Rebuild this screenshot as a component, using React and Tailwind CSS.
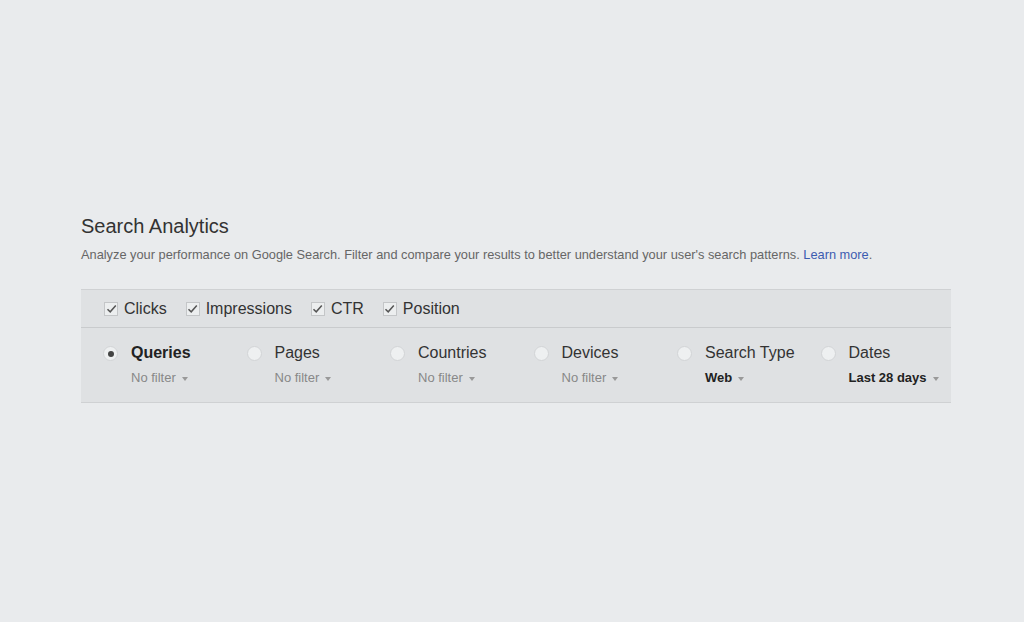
import React from 'react';

const metrics = ['Clicks', 'Impressions', 'CTR', 'Position'];

const groups = [
  { label: 'Queries', value: 'No filter', active: true },
  { label: 'Pages', value: 'No filter' },
  { label: 'Countries', value: 'No filter' },
  { label: 'Devices', value: 'No filter' },
  { label: 'Search Type', value: 'Web', strong: true },
  { label: 'Dates', value: 'Last 28 days', strong: true },
];

function Check() {
  return (
    <span className="flex h-[14px] w-[14px] items-center justify-center border border-[#c4c6c8] bg-[#eceeef]">
      <svg width="11" height="10" viewBox="0 0 11 10">
        <path d="M1.5 5.2 L4.2 7.8 L9.8 1.5" fill="none" stroke="#555" strokeWidth="1.5" />
      </svg>
    </span>
  );
}

function Caret() {
  return <span className="ml-[6px] inline-block h-0 w-0 border-x-[3.5px] border-t-[4px] border-x-transparent border-t-[#999] align-middle" />;
}

export default function App() {
  return (
    <div className="h-[622px] w-[1024px] bg-[#e9ebed] pt-[214px] font-['Liberation_Sans',Arial,sans-serif]">
      <div className="pl-[81px]">
        <h1 className="text-[20px] leading-[24px] text-[#333]">Search Analytics</h1>
        <p className="mt-[9px] text-[12.8px] leading-[16px] text-[#666]">
          Analyze your performance on Google Search. Filter and compare your results to better understand your user's search patterns.{' '}
          <span className="text-[#3d5cb0]">Learn more</span>.
        </p>
      </div>

      <div className="ml-[81px] mt-[26px] w-[870px] border-y border-[#cfd1d3] bg-[#dfe1e3]">
        <div className="flex h-[38px] items-center border-b border-[#c9cbcd] pl-[23px] text-[16px] text-[#333]">
          {metrics.map((m) => (
            <label key={m} className="mr-[19px] flex items-center gap-[6px]">
              <Check />
              <span>{m}</span>
            </label>
          ))}
        </div>
        <div className="flex h-[74px] pl-[22px] pt-[15px]">
          {groups.map((g, i) => (
            <div key={g.label} className={`flex shrink-0 ${i < groups.length - 1 ? 'w-[143.5px]' : ''}`}>
              <span className="mt-[3px] flex h-[15px] w-[15px] items-center justify-center rounded-full border border-[#d2d4d6] bg-[#eef0f1]">
                {g.active && <span className="h-[6px] w-[6px] rounded-full bg-[#444]" />}
              </span>
              <div className="ml-[13px]">
                <div className={`text-[16px] leading-[20px] ${g.active ? 'font-bold text-[#222]' : 'text-[#333]'}`}>{g.label}</div>
                <div className={`mt-[7px] text-[13px] leading-[16px] ${g.strong ? 'font-bold text-[#222]' : 'text-[#888]'}`}>
                  {g.value}
                  <Caret />
                </div>
              </div>
            </div>
          ))}
        </div>
      </div>
    </div>
  );
}
